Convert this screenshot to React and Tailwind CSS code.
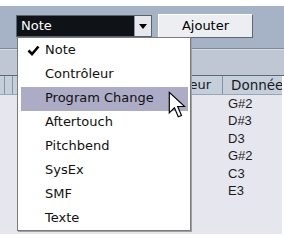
import React from 'react';

const items = ['Note', 'Contrôleur', 'Program Change', 'Aftertouch', 'Pitchbend', 'SysEx', 'SMF', 'Texte'];
const values = ['G#2', 'D#3', 'D3', 'G#2', 'C3', 'E3'];

export default function App() {
  return (
    <div className="relative w-[284px] h-[237px] overflow-hidden bg-white font-['DejaVu_Sans',sans-serif] text-[13px]">
      {/* top white strip */}
      <div className="h-[6px] bg-white" />

      {/* toolbar */}
      <div className="h-[42px] bg-[#a6b3c6] flex items-start pt-[8px] pl-[16px] gap-[6px]">
        <div className="mt-[1px] w-[136px] h-[22px] bg-[#0f1317] border border-[#5a6270] flex items-stretch">
          <div className="flex-1 text-white leading-[20px] pl-[4px]">Note</div>
          <div className="w-[17px] bg-[#e6e8ec] border-l border-[#8c95a3] flex items-center justify-center">
            <svg width="8" height="5" viewBox="0 0 8 5">
              <path d="M0 0 L8 0 L4 5 Z" fill="#000" />
            </svg>
          </div>
        </div>
        <div className="w-[95px] h-[24px] bg-[#eceef2] border border-t-white border-l-white border-b-[#5f6773] border-r-[#5f6773] flex items-center justify-center text-black">
          Ajouter
        </div>
      </div>

      {/* separator lines and info band */}
      <div className="h-[1px] bg-[#7f8b9d]" />
      <div className="h-[1px] bg-[#d6dce4]" />
      <div className="h-[25px] bg-[#bec7d3]" />
      <div className="h-[1px] bg-[#5d6878]" />

      {/* table */}
      <div className="w-[282px]">
        <div className="h-[19px] flex bg-[#c5cedb] border-b border-[#9aa5b5] text-[#1a1a1a]">
          <div className="w-[5px] border-r border-[#8793a4]" />
          <div className="w-[8px] border-r border-[#8793a4]" />
          <div className="w-[70px] border-r border-[#8793a4]" />
          <div className="w-[83px] border-r border-[#8793a4]" />
          <div className="w-[57px] border-r border-[#8793a4] pl-[4px] leading-[18px] whitespace-nowrap overflow-hidden">Valeur</div>
          <div className="flex-1 pl-[8px] leading-[18px] whitespace-nowrap overflow-hidden text-[13.5px]">Données</div>
        </div>
        <div className="h-[139px] bg-[#e6e6ef] font-['Liberation_Sans',Arial,sans-serif] text-[13px] text-[#1c1c1c]">
          {values.map((v, i) => (
            <div key={i} className="h-[17.4px] pl-[228px] leading-[17.4px]">{v}</div>
          ))}
        </div>
      </div>

      {/* dropdown menu */}
      <div className="absolute left-[17px] top-[37px] w-[174px] h-[194px] bg-white border border-[#7b7b7b] shadow-[1px_1px_0_#a0a0a0]">
        {items.map((it, i) => (
          <div key={it} className="relative h-[24px] flex items-center">
            {i === 2 && <div className="absolute left-[3px] right-[2px] top-[1px] bottom-[-1px] bg-[#acacc7]" />}
            {i === 0 && (
              <svg className="absolute left-[9px] top-[7px]" width="13" height="11" viewBox="0 0 13 11">
                <path d="M1.5 5.5 L5 9 L11.5 1.5" fill="none" stroke="#000" strokeWidth="2.6" />
              </svg>
            )}
            <span className="relative pl-[27px] text-[#111] whitespace-nowrap">{it}</span>
          </div>
        ))}
      </div>

      {/* mouse cursor */}
      <svg className="absolute left-[168px] top-[91px]" width="18" height="31" viewBox="0 0 14 24">
        <path d="M1 1 L1 17 L5 13 L8 20 L10.5 19 L7.5 12 L13 12 Z" fill="#fff" stroke="#000" strokeWidth="0.9" strokeLinejoin="miter" />
      </svg>
    </div>
  );
}
